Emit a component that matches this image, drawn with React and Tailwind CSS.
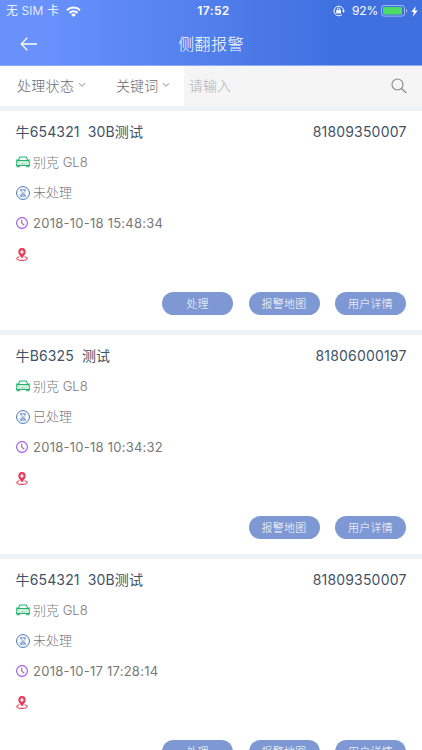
const alarms = [
  { plate: '牛654321', name: '30B测试', device: '81809350007', car: '别克 GL8', status: '未处理', time: '2018-10-18 15:48:34', pending: true },
  { plate: '牛B6325', name: '测试', device: '81806000197', car: '别克 GL8', status: '已处理', time: '2018-10-18 10:34:32', pending: false },
  { plate: '牛654321', name: '30B测试', device: '81809350007', car: '别克 GL8', status: '未处理', time: '2018-10-17 17:28:14', pending: true },
];

const WifiIcon = () => (
  <svg width="15" height="11" viewBox="0 0 15 11" fill="none" stroke="white" strokeWidth="2.1">
    <path d="M1 4.2a9.2 9.2 0 0 1 13 0" />
    <path d="M3.5 6.9a5.7 5.7 0 0 1 8 0" />
    <path d="M7.5 11 5.1 8.7a3.3 3.3 0 0 1 4.8 0z" fill="white" stroke="none" />
  </svg>
);

const RotationLockIcon = () => (
  <svg width="12" height="12" viewBox="0 0 12 12" fill="none" stroke="white">
    <path d="M10.2 4A4.8 4.8 0 1 0 9 9.6M10.6 6.3A4.8 4.8 0 0 0 10.2 4" strokeWidth="1" />
    <path d="M9 5.8h3l-1.5 2z" fill="white" stroke="none" />
    <rect x="3.2" y="5" width="4.8" height="3.6" rx="0.4" fill="white" stroke="none" />
    <path d="M4.4 5.4V4.1a1.2 1.2 0 0 1 2.4 0v1.3" strokeWidth="0.9" />
  </svg>
);

const BatteryIcon = () => (
  <svg width="27" height="12" viewBox="0 0 27 12">
    <rect x="0.5" y="0.5" width="23" height="10.6" rx="2.4" fill="none" stroke="white" strokeOpacity="0.5" />
    <rect x="2" y="2" width="19" height="7.6" rx="1" fill="#4cd964" />
    <path d="M25 4v3.6c.8-.3 1.3-1 1.3-1.8S25.8 4.3 25 4z" fill="white" fillOpacity="0.5" />
  </svg>
);

const BoltIcon = () => (
  <svg width="7" height="11" viewBox="0 0 7 11" fill="white">
    <path d="M4.8 0.3 0.2 6h2.7L1.8 10.7 6.8 4.5H4z" />
  </svg>
);

const BackIcon = () => (
  <svg width="18" height="14" viewBox="0 0 18 14" fill="none" stroke="white" strokeWidth="1.3">
    <path d="M17 7H1.2M7.3 0.8 1.2 7l6.1 6.2" />
  </svg>
);

const ChevronIcon = () => (
  <svg width="8" height="6" viewBox="0 0 8 6" fill="none" stroke="#888e96" strokeWidth="1">
    <path d="M1 1.2 4 4.4 7 1.2" />
  </svg>
);

const SearchIcon = () => (
  <svg width="16" height="16" viewBox="0 0 16 16" fill="none" stroke="#85858a" strokeWidth="1.1">
    <circle cx="6.5" cy="6.5" r="5.5" />
    <path d="m10.5 10.5 4.8 4.5" />
  </svg>
);

const CarIcon = () => (
  <svg width="14" height="12" viewBox="0 0 14 12" fill="none" stroke="#22b56c" strokeWidth="1.1">
    <path d="M2.2 4.6 3.4 1.8Q3.7 1 4.6 1h4.8q.9 0 1.2.8l1.2 2.8" />
    <path d="M0 4.1h1.7M12.3 4.1H14" />
    <path d="M2.2 4.6h9.6q1.5 0 1.5 1.5v3.3H.7V6.1q0-1.5 1.5-1.5z" />
    <path d="M1.2 9.4v1.4h2V9.5M12.8 9.4v1.4h-2V9.5" />
    <path d="M2.6 6.7h1.3M10.1 6.7h1.3M4.9 7.3h4.2" strokeWidth="0.6" />
  </svg>
);

const HourglassIcon = () => (
  <svg width="14" height="14" viewBox="0 0 14 14" fill="none" stroke="#4472c0">
    <circle cx="7" cy="7" r="6.4" strokeWidth="1" />
    <path d="M3.9 3.9h6.2M3.9 10.1h6.2" strokeWidth="0.9" />
    <path d="M5 4v1.3L6.5 7 5 8.7V10M9 4v1.3L7.5 7 9 8.7V10M5.6 8.5h2.8" strokeWidth="0.7" />
  </svg>
);

const ClockIcon = () => (
  <svg width="12" height="12" viewBox="0 0 12 12" fill="none" stroke="#a050e0" strokeWidth="1.1">
    <circle cx="6" cy="6" r="5.4" />
    <path d="M5.8 2.8v3.5l2.5 1.8" />
  </svg>
);

const LocationIcon = () => (
  <svg width="12" height="13" viewBox="0 0 13 13" preserveAspectRatio="none" fill="none" stroke="#e6435c">
    <path d="M3.8 9H2.6Q.8 9.6.8 10.6c0 1.1 2.5 1.8 5.7 1.8s5.7-.7 5.7-1.8q0-1-1.8-1.6H9.2" strokeWidth="1.1" />
    <path d="M6.5 10.4C4.3 7.8 2.5 6 2.5 3.9a4 4 0 0 1 8 0c0 2.1-1.8 3.9-4 6.5zM6.5 2.3a1.6 1.6 0 1 0 0 3.2 1.6 1.6 0 0 0 0-3.2z" fill="#e6435c" fillRule="evenodd" stroke="none" />
  </svg>
);

const Row = ({ icon, children }) => (
  <div className="flex h-[30.6px] items-center">
    <span className="flex w-[17.5px] shrink-0">{icon}</span>
    {children}
  </div>
);

const ActionButton = ({ children }) => (
  <button className="flex h-[23px] w-[71px] items-center justify-center rounded-full bg-[#7d98d3] text-[11px] tracking-[0.3px] text-white">
    {children}
  </button>
);

const AlarmCard = ({ alarm }) => (
  <section className="h-[219px] shrink-0 bg-white px-[15.5px] pt-[5px]">
    <div className="flex h-[31px] items-center justify-between text-[14px] text-[#435266]">
      <h2 className="flex gap-[8px] font-[380] tracking-[0.15px]">
        <span>{alarm.plate}</span>
        <span>{alarm.name}</span>
      </h2>
      <span className="font-[380] tracking-[0.18px]">{alarm.device}</span>
    </div>
    <div className="text-[13px] text-[#787878]">
      <Row icon={<CarIcon />}>{alarm.car}</Row>
      <Row icon={<HourglassIcon />}>{alarm.status}</Row>
      <Row icon={<ClockIcon />}>
        <span className="font-[380] tracking-[0.25px]">{alarm.time}</span>
      </Row>
      <Row icon={<LocationIcon />} />
    </div>
    <div className="mt-[23px] mr-[0.5px] flex justify-end gap-[15.5px]">
      {alarm.pending && <ActionButton>处理</ActionButton>}
      <ActionButton>报警地图</ActionButton>
      <ActionButton>用户详情</ActionButton>
    </div>
  </section>
);

const App = () => (
  <div className="h-[750px] overflow-hidden bg-[#eff2f5] font-[Inter,'Noto_Sans_CJK_SC',sans-serif] font-light">
    <header className="h-[66px] border-b border-[#8facf0] bg-linear-to-r from-[#6891fc] from-10% to-[#3f70df] to-80% text-white">
      <div className="grid h-[22px] grid-cols-3 items-center pr-[4px] pl-[6px] text-[12px]">
        <div className="flex items-center gap-[7px]">
          <span className="whitespace-nowrap font-[350] tracking-[0.1px]">无 SIM 卡</span>
          <WifiIcon />
        </div>
        <span className="pl-[3px] text-center font-semibold tracking-[0.4px]">17:52</span>
        <div className="flex items-center justify-end">
          <RotationLockIcon />
          <span className="mr-[3px] ml-[7px] font-normal tracking-[-0.2px]">92%</span>
          <BatteryIcon />
          <span className="ml-[3px]"><BoltIcon /></span>
        </div>
      </div>
      <div className="grid h-[43px] grid-cols-[1fr_auto_1fr] items-center pl-[20px]">
        <BackIcon />
        <h1 className="-ml-[20px] text-[16px] tracking-[0.4px]">侧翻报警</h1>
      </div>
    </header>

    <div className="mb-[5px] flex h-[40px] bg-white text-[14px] text-[#6b6b6b]">
      <button className="flex w-[99px] items-center gap-[4px] pb-[2px] pl-[17px] tracking-[0.3px]">处理状态 <ChevronIcon /></button>
      <button className="flex w-[85px] items-center gap-[4px] pb-[2px] pl-[17px] tracking-[0.1px]">关键词 <ChevronIcon /></button>
      <div className="flex flex-1 items-center justify-between bg-[#f5f5f5] pr-[15px] pb-[2px] pl-[5px]">
        <span className="text-[#aeaeb2]">请输入</span>
        <span className="pt-[1px]"><SearchIcon /></span>
      </div>
    </div>

    <main className="flex flex-col gap-[5px]">
      {alarms.map((alarm, i) => <AlarmCard key={i} alarm={alarm} />)}
    </main>
  </div>
);

export default App;
